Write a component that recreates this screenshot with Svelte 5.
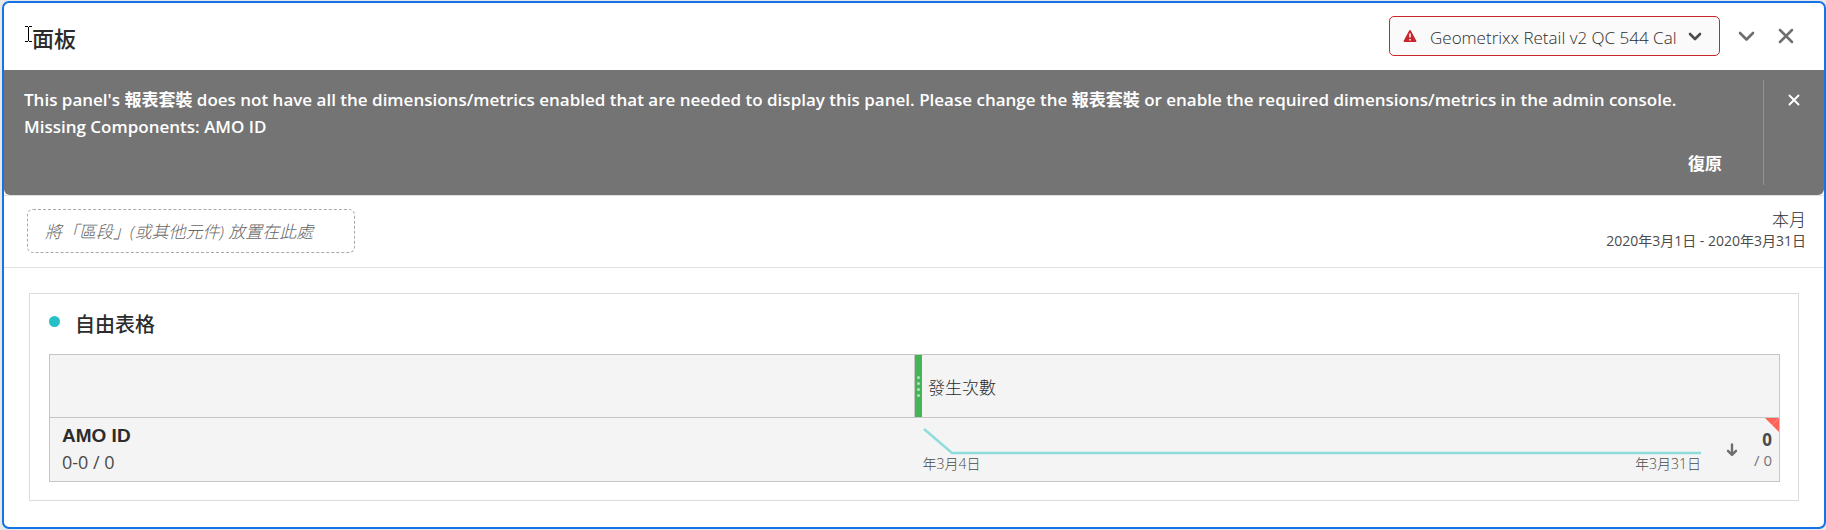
<script>
  const suites = ['Geometrixx Retail v2 QC 544 Cal'];
  let suite = $state(suites[0]);
  let table = { metric: '發生次數', dimension: 'AMO ID', rows: '0-0 / 0', total: '0', of: '/ 0', start: '年3月4日', end: '年3月31日' };
</script>

<section class="panel">
  <header class="head">
    <h1>面板</h1>
    <svg class="caret" width="8" height="17" viewBox="0 0 8 17" shape-rendering="crispEdges" aria-hidden="true">
      <path d="M0 .5h3M4 .5h3M0 15.5h3M4 15.5h3M3.500 1v14" fill="none" stroke="#000" />
    </svg>
    <div class="actions">
      <label class="suite">
        <svg class="warn" width="14" height="12" viewBox="0 0 14 12" aria-hidden="true">
          <path d="M6.200.6a.9.9 0 0 1 1.600 0l5.500 10.200a.8.8 0 0 1-.7 1.200H1.400a.8.8 0 0 1-.7-1.200z" fill="#c9252d" />
          <path d="M7 3.500v4M7 9v1.500" stroke="#fff" stroke-width="1.500" />
        </svg>
        <select bind:value={suite} aria-label="報表套裝">
          {#each suites as s}
            <option value={s}>{s}</option>
          {/each}
        </select>
        <svg class="arrow" width="14" height="9" viewBox="0 0 14 9" aria-hidden="true">
          <path d="M2 2l5 5 5-5" fill="none" stroke="#4b4b4b" stroke-width="2.600" stroke-linecap="round" stroke-linejoin="round" />
        </svg>
      </label>
      <button class="icon" aria-label="收合">
        <svg width="17" height="11" viewBox="0 0 17 11">
          <path d="M2 2l6.500 6.500L15 2" fill="none" stroke="#6e6e6e" stroke-width="2.600" stroke-linecap="round" stroke-linejoin="round" />
        </svg>
      </button>
      <button class="icon" aria-label="關閉">
        <svg width="16" height="16" viewBox="0 0 16 16">
          <path d="M2 2l12 12M14 2L2 14" fill="none" stroke="#6e6e6e" stroke-width="2.500" stroke-linecap="round" />
        </svg>
      </button>
    </div>
  </header>

  <div class="alert" role="alert">
    <div class="body">
      <p>
        This panel's 報表套裝 does not have all the dimensions/metrics enabled that are needed to display this panel. Please change the 報表套裝 or enable the required dimensions/metrics in the admin console.<br />Missing Components: AMO ID
      </p>
      <button class="undo">復原</button>
    </div>
    <div class="dismiss">
      <button class="icon" aria-label="關閉通知">
        <svg width="12" height="12" viewBox="0 0 12 12">
          <path d="M1.500 1.500l9 9M10.500 1.500l-9 9" fill="none" stroke="#fff" stroke-width="1.900" stroke-linecap="round" />
        </svg>
      </button>
    </div>
  </div>

  <div class="filters">
    <div class="drop">將「區段」(或其他元件) 放置在此處</div>
    <div class="dates">
      <div class="preset">本月</div>
      <div class="range">2020年3月1日 - 2020年3月31日</div>
    </div>
  </div>

  <article class="card">
    <div class="title">
      <span class="dot"></span>
      <h2>自由表格</h2>
    </div>
    <table>
      <thead>
        <tr>
          <td></td>
          <th class="metric" scope="col">
            <div class="metric-in">
              <span class="grip"><i></i><i></i><i></i><i></i></span>
              <span>{table.metric}</span>
            </div>
          </th>
        </tr>
      </thead>
      <tbody>
        <tr>
          <th class="dim" scope="row">
            <div class="name">{table.dimension}</div>
            <div class="count">{table.rows}</div>
          </th>
          <td class="summary">
            <div class="summary-in">
              <div class="trend">
                <svg viewBox="0 0 778 29" preserveAspectRatio="none" aria-hidden="true">
                  <path d="M1 2L29 26H778" fill="none" stroke="#8edcdc" stroke-width="2.500" vector-effect="non-scaling-stroke" />
                </svg>
                <div class="axis"><span>{table.start}</span><span>{table.end}</span></div>
              </div>
              <svg class="sort" width="12" height="14" viewBox="0 0 12 14" aria-hidden="true">
                <path d="M6 1.500v10M2 7.800l4 4 4-4" fill="none" stroke="#6e6e6e" stroke-width="2.400" stroke-linecap="round" stroke-linejoin="round" />
              </svg>
              <div class="total">
                <div class="sum">{table.total}</div>
                <div class="of">{table.of}</div>
              </div>
            </div>
            <svg class="corner" width="14" height="14" viewBox="0 0 14 14" aria-hidden="true">
              <path d="M0 0h14v14z" fill="#ff6259" />
              <path d="M7 7l7-7" stroke="#ff8a82" stroke-width="1" />
            </svg>
          </td>
        </tr>
      </tbody>
    </table>
  </article>
</section>

<style>
  :global(body) {
    background: #e8e8e8;
    font-family: 'Open Sans', 'Noto Sans CJK TC', sans-serif;
    color: #4b4b4b;
  }
  * {
    box-sizing: border-box;
  }
  h1, h2, p {
    margin: 0;
  }
  svg {
    display: block;
    flex: none;
  }
  button {
    border: 0;
    padding: 0;
    background: none;
    font: inherit;
    color: inherit;
    cursor: pointer;
  }
  .panel {
    margin: 1px 0 0 2px;
    border: 2px solid #1473e6;
    border-radius: 7px;
    background: #fff;
    padding-bottom: 26px;
  }
  .head {
    position: relative;
    display: flex;
    align-items: center;
    justify-content: space-between;
    height: 67px;
    padding: 0 30px 1px 28px;
  }
  h1 {
    font-size: 22px;
    line-height: 32px;
    font-weight: 500;
    color: #2c2c2c;
    padding-top: 4px;
  }
  .caret {
    position: absolute;
    left: 21px;
    top: 23px;
  }
  .actions {
    display: flex;
    align-items: center;
  }
  .suite {
    position: relative;
    display: flex;
    align-items: center;
    width: 331px;
    height: 40px;
    margin-right: 18px;
    border: 1px solid #c9252d;
    border-radius: 5px;
    background: #fafafa;
  }
  .warn {
    position: absolute;
    left: 13px;
    pointer-events: none;
  }
  select {
    appearance: none;
    flex: 1;
    min-width: 0;
    height: 38px;
    padding: 2px 32px 0 40px;
    border: 0;
    background: none;
    font: inherit;
    font-size: 17px;
    font-weight: 300;
    color: #2c2c2c;
  }
  .arrow {
    position: absolute;
    right: 17px;
    pointer-events: none;
  }
  .actions .icon + .icon {
    margin-left: 23px;
  }
  .alert {
    display: flex;
    min-height: 125px;
    padding: 10px 0;
    border-radius: 0 0 6px 6px;
    background: #747474;
    color: #fff;
    font-weight: 600;
    font-size: 17px;
    line-height: 27px;
  }
  .body {
    flex: 1;
    display: flex;
    flex-direction: column;
    justify-content: space-between;
    padding: 6px 41px 8px 20px;
  }
  .undo {
    align-self: flex-end;
  }
  .dismiss {
    display: flex;
    align-items: flex-start;
    width: 61px;
    padding: 14px 0 0 24px;
    border-left: 1px solid #929292;
  }
  .filters {
    display: flex;
    justify-content: space-between;
    align-items: flex-start;
    height: 73px;
    padding: 13px 18px 0 23px;
    border-top: 1px solid #e1e1e1;
    border-bottom: 1px solid #e1e1e1;
  }
  .drop {
    width: 328px;
    height: 44px;
    padding-left: 17px;
    border: 1px dashed #a8a8a8;
    border-radius: 6px;
    font-size: 17px;
    line-height: 44px;
    font-style: italic;
    font-weight: 300;
    color: #666;
  }
  .dates {
    text-align: right;
    font-weight: 300;
    color: #2c2c2c;
  }
  .preset {
    font-size: 17px;
    line-height: 22px;
  }
  .range {
    font-size: 14px;
    line-height: 20px;
    font-weight: 400;
    color: #4b4b4b;
  }
  .card {
    margin: 25px 25px 0;
    padding: 12px 18px 18px 19px;
    border: 1px solid #dcdcdc;
  }
  .title {
    display: flex;
    align-items: center;
    gap: 15px;
    height: 48px;
    padding-bottom: 11px;
  }
  .dot {
    width: 11px;
    height: 11px;
    margin-bottom: 6px;
    border-radius: 50%;
    background: #26c0c7;
  }
  h2 {
    font-size: 20px;
    line-height: 28px;
    font-weight: 500;
    color: #2c2c2c;
  }
  table {
    width: 100%;
    table-layout: fixed;
    border-collapse: collapse;
    background: #f4f4f4;
    border: 1px solid #c6c6c6;
  }
  th, td {
    padding: 0;
    text-align: left;
    font-weight: 400;
  }
  tr {
    height: 63px;
  }
  tbody tr {
    height: 64px;
    border-top: 1px solid #c6c6c6;
  }
  .metric {
    border-left: 1px solid #c6c6c6;
  }
  .metric-in {
    display: flex;
    align-items: center;
    gap: 6px;
    height: 62px;
    font-size: 17px;
    font-weight: 300;
    color: #2c2c2c;
  }
  .grip {
    display: flex;
    flex-direction: column;
    align-items: center;
    justify-content: center;
    gap: 3px;
    width: 7px;
    height: 100%;
    background: #44b556;
  }
  .grip i {
    width: 3px;
    height: 3px;
    border-radius: 50%;
    background: #b4e1bb;
  }
  .dim {
    padding: 0 12px 2px;
  }
  .name {
    font: 700 19px/27px 'Liberation Sans', sans-serif;
    color: #2c2c2c;
  }
  .count {
    font-size: 18px;
    line-height: 27px;
  }
  .summary {
    position: relative;
  }
  .summary-in {
    display: flex;
    align-items: center;
    height: 62px;
    padding: 0 7px 0 8px;
  }
  .trend {
    flex: 1;
    min-width: 0;
    padding-bottom: 2px;
  }
  .trend svg {
    width: 100%;
    height: 29px;
  }
  .axis {
    display: flex;
    justify-content: space-between;
    font-size: 14px;
    line-height: 15px;
    font-weight: 300;
    color: #4b4b4b;
  }
  .sort {
    margin-left: 25px;
  }
  .total {
    width: 34px;
    text-align: right;
    line-height: 20px;
  }
  .sum {
    font-size: 17px;
    font-weight: 700;
  }
  .of {
    font-size: 15px;
    color: #747474;
  }
  .corner {
    position: absolute;
    top: 0;
    right: 0;
  }
</style>
